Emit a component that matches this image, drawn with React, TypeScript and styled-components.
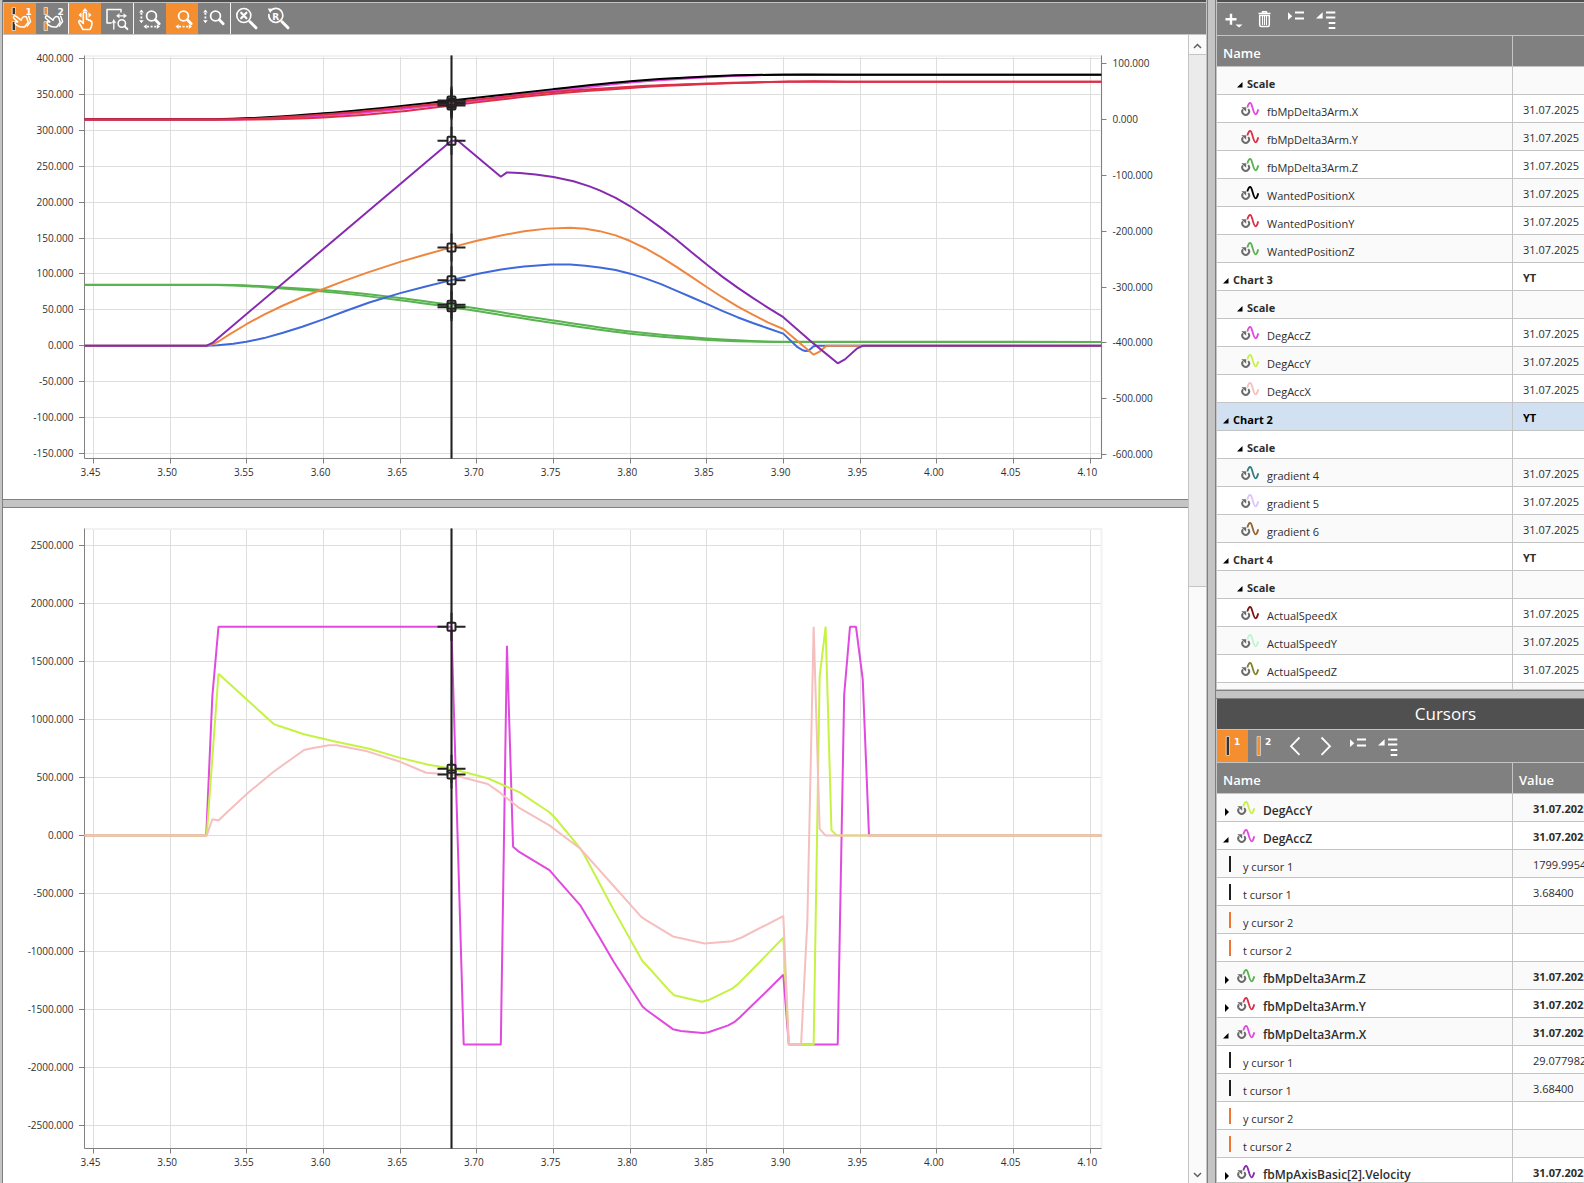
import React, { useLayoutEffect, useRef, useState } from "react";
import styled, { createGlobalStyle, css } from "styled-components";

/* ---------- theme values ---------- */

const c = {
  line: "#c4c4c4",
  edge: "#808080",
  bar: "#808080",
  title: "#505050",
  accent: "#f58e2f",
  text: "#2d2d2d",
  alt: "#fafafa",
  selected: "#d2e1f1",
  magenta: "#e04ade",
  lime: "#c6f244",
  pink: "#f5bfbd",
  red: "#dc3049",
  green: "#58b350",
  purple: "#862bb0",
  orange: "#ee8640",
  blue: "#3f68d9",
};

const Global = createGlobalStyle`
  *, *::before, *::after { box-sizing: border-box; }
  html, body, #root { height: 100%; }
  body {
    margin: 0;
    background: #fff;
    color: ${c.text};
    font-family: "Open Sans", "Noto Sans", sans-serif;
    font-size: 11px;
  }
`;

/* ---------- page frame ---------- */

const Page = styled.div`
  display: grid;
  grid-template-columns: 3px minmax(0, 1fr) 9px 368px;
  height: 100vh;
  overflow: hidden;
`;

const LeftEdge = styled.div`
  background: ${c.line};
  border-right: 1px solid ${c.edge};
`;

const Splitter = styled.div<{ $horizontal?: boolean }>`
  background: ${c.line};
  border: 0 solid ${c.edge};
  border-width: ${(p) => (p.$horizontal ? "1px 0" : "0 1px")};
`;

const TopStrip = styled.div`
  flex: none;
  height: 3px;
  background: ${c.title};
  border-bottom: 1px solid ${c.line};
`;

const Workspace = styled.main`
  display: flex;
  flex-direction: column;
  min-width: 0;
  min-height: 0;
  border-right: 1px solid ${c.line};
`;

const WorkArea = styled.div`
  flex: 1;
  display: flex;
  min-height: 0;
`;

const ChartStack = styled.div`
  flex: 1;
  min-width: 0;
  display: grid;
  grid-template-rows: minmax(0, 464fr) 9px minmax(0, 675fr);
`;

const SidePanels = styled.aside`
  display: grid;
  grid-template-rows: minmax(0, 690fr) 9px minmax(0, 484fr);
  min-width: 0;
  overflow: hidden;
`;

const Panel = styled.section`
  display: flex;
  flex-direction: column;
  width: 458px;
  min-height: 0;
  overflow: hidden;
  border-left: 1px solid ${c.line};
  border-bottom: 1px solid ${c.line};
`;

const PanelTitle = styled.h2`
  flex: none;
  margin: 0;
  height: 31px;
  line-height: 29px;
  text-align: center;
  font-size: 17px;
  font-weight: 400;
  color: #fff;
  background: ${c.title};
  border-bottom: 1px solid ${c.line};
`;

/* ---------- toolbars ---------- */

const Toolbar = styled.div`
  flex: none;
  display: flex;
  height: 32px;
  background: ${c.bar};
  border-bottom: 1px solid ${c.line};
`;

const SideToolbar = styled(Toolbar)`
  height: 33px;
`;

const ToolButton = styled.button<{ $active?: boolean; $narrow?: boolean }>`
  display: flex;
  align-items: flex-start;
  width: ${(p) => (p.$narrow ? "31px" : "32px")};
  height: 100%;
  padding: 0;
  border: 0;
  background: ${(p) => (p.$active ? c.accent : "transparent")};
`;

const ToolGroup = styled.div`
  display: flex;
  border-right: 1px solid #f4f4f4;
  &:first-child {
    border-left: 1px solid ${c.line};
  }
  &:last-child {
    border-right: 0;
  }
`;

/* ---------- scroll bar ---------- */

const ScrollBar = styled.div`
  flex: none;
  width: 18px;
  display: flex;
  flex-direction: column;
  background: ${c.alt};
  border-left: 1px solid ${c.line};
`;

const ScrollButton = styled.button`
  flex: none;
  width: 17px;
  height: 19px;
  padding: 2px 0 0;
  border: 0;
  background: transparent;
  display: grid;
  place-items: center;
`;

const ScrollThumb = styled.div`
  flex: 533;
  background: #ebebeb;
  border: solid ${c.line};
  border-width: 1px 0;
`;

const ScrollRest = styled.div`
  flex: 579;
`;

/* ---------- tables ---------- */

const Grid = styled.table`
  width: 100%;
  table-layout: fixed;
  border-collapse: separate;
  border-spacing: 0;
`;

const NameCol = styled.col`
  width: 296px;
`;

const HeadCell = styled.th`
  height: 31px;
  padding: 3px 6px 0;
  text-align: left;
  font-size: 13px;
  line-height: 16px;
  font-weight: 600;
  color: #fff;
  background: ${c.bar};
  border: 0 solid ${c.line};
  border-width: 0 1px 1px 0;
`;

const Row = styled.tr<{ $selected?: boolean }>`
  background: #fff;
  &:nth-child(odd) {
    background: ${c.alt};
  }
  ${(p) =>
    p.$selected &&
    css`
      && {
        background: ${c.selected};
        color: #000;
      }
    `}
`;

const cell = css`
  height: 28px;
  border: 0 solid ${c.line};
  border-width: 0 1px 1px 0;
  line-height: 15px;
  white-space: nowrap;
`;

const NameCell = styled.td`
  ${cell}
  padding: 0;
`;

const ValueCell = styled.td<{ $bold?: boolean; $indent: number }>`
  ${cell}
  padding: 1px 0 0 ${(p) => p.$indent}px;
  font-weight: ${(p) => (p.$bold ? 700 : 400)};
`;

const NameLine = styled.div<{ $indent: number; $gap: number; $bold?: boolean; $large?: boolean }>`
  display: flex;
  align-items: center;
  gap: ${(p) => p.$gap}px;
  height: 27px;
  padding-left: ${(p) => p.$indent}px;
  font-size: ${(p) => (p.$large ? "12px" : "11px")};
  font-weight: ${(p) => (p.$bold ? (p.$large ? 600 : 700) : 400)};
`;

const Label = styled.span`
  padding-top: 6px;
`;

const CursorMark = styled.span<{ $color: string }>`
  width: 2px;
  height: 16px;
  background: ${(p) => p.$color};
`;

const ArrowSlot = styled.button`
  width: 6px;
  height: 20px;
  padding: 8px 0 0;
  border: 0;
  background: transparent;
  display: flex;
  align-items: center;
  svg {
    flex: none;
  }
`;

/* ---------- icons ---------- */

const Svg = ({ children, w = 32 }: { children: React.ReactNode; w?: number }) => (
  <svg width={w} height={31} viewBox={`0 0 ${w} 31`} fill="none" stroke="#fff" strokeWidth={1.6} strokeLinecap="round" strokeLinejoin="round" aria-hidden>
    {children}
  </svg>
);

const digit = { fontFamily: '"DejaVu Sans", sans-serif', fontWeight: 700, fontSize: 9, fill: "#fff", stroke: "none" } as const;

const CursorHandIcon = ({ n, color }: { n: number; color: string }) => (
  <Svg>
    <g fill={color} stroke="#e6e6e6" strokeWidth={0.8}>
      <rect x={8.5} y={4.5} width={3} height={7} />
      <rect x={8.5} y={18.5} width={3} height={9} />
    </g>
    <path d="M17 17.200l-5.200-4c-1.500-1-3.200.6-2 2l4 3.700c-2.500-.4-3.800 1.200-1.800 2.700 1.600 1.300 3.500 2.400 6 2.400h2.700l3.500-4.700-1.700-5.300c-2.200-1-4.200-.4-5.500 3.200z" strokeWidth={1.500} />
    <path d="M24.700 13.200l1.900 5.300-3.400 4.700" strokeWidth={1.400} />
    <text x={21.5} y={12} {...digit}>{n}</text>
  </Svg>
);

const PanIcon = () => (
  <Svg>
    <g fill="#fff" stroke="none">
      <path d="M16 5l3 3.500h-6zM9.500 12l3-2.800v5.600zM22.500 12l-3-2.800v5.600z" />
    </g>
    <path d="M14.300 18.500v-7.700a1.600 1.600 0 0 1 3.200 0v5.700c1.400-.5 2.200 0 2.400.9 1.200-.3 2 .2 2.100 1 .8.2 1.100.8 1 1.700l-.5 3.200-1.500 3.200h-7l-3.700-6.300c-.9-1.500-.7-2.700.6-2.600 1 .1 2 1.600 3.400 2.900z" />
  </Svg>
);

const ZoomRectIcon = () => (
  <Svg>
    <path d="M10.500 20H6V6.500h14v3" strokeWidth={1.500} strokeLinecap="butt" />
    <path d="M16 12.800h9M12.800 17v9" strokeWidth={1.300} />
    <path d="M18 10.800l-2.200 2 2.200 2zM23 10.800l2.200 2-2.200 2zM10.800 19.500l2-2.300 2 2.300z" fill="#fff" strokeWidth={0.500} />
    <circle cx={20.800} cy={20.500} r={3.700} strokeWidth={1.500} />
    <path d="M23.600 23.300l2.800 2.800" strokeWidth={2} />
  </Svg>
);

const Lens = ({ x }: { x: number }) => (
  <>
    <circle cx={x} cy={13} r={4.900} strokeWidth={1.800} />
    <path d={`M${x + 3.800} 16.800l3.900 4`} strokeWidth={2.800} />
  </>
);

const VArrows = () => (
  <>
    <path d="M7.400 10v7.500" strokeWidth={1.800} strokeDasharray="1.800 1.800" strokeLinecap="butt" />
    <path d="M7.400 6.600l2.300 3H5.100zM7.400 20.200l2.300-3H5.100z" fill="#fff" stroke="none" />
  </>
);

const HArrows = () => (
  <>
    <path d="M13 23.600h9.500" strokeWidth={1.800} strokeDasharray="2 1.600" strokeLinecap="butt" />
    <path d="M9.500 23.600l3.200-2.300v4.600zM26 23.600l-3.200-2.300v4.600z" fill="#fff" stroke="none" />
  </>
);

const BigHandle = () => <path d="M19 18.800l6 6" strokeWidth={3} />;

const ResetXIcon = () => (
  <Svg>
    <circle cx={12.800} cy={12.500} r={7} strokeWidth={1.600} />
    <path d="M10.200 9.700l5.200 5.600M15.400 9.700l-5.200 5.600" strokeWidth={2.200} />
    <BigHandle />
  </Svg>
);

const ResetRIcon = () => (
  <Svg>
    <path d="M8.200 7.200a7 7 0 1 1-2.300 4.300" strokeWidth={1.600} />
    <path d="M4.800 5.600l5.200.2-2.800 4.300z" fill="#fff" stroke="none" />
    <text x={9.300} y={16.500} {...digit}>R</text>
    <BigHandle />
  </Svg>
);

const AddIcon = () => (
  <Svg w={31}>
    <path d="M14 10.800v11M8.500 16.300h11" strokeWidth={2.400} strokeLinecap="butt" />
    <path d="M18.500 21.500h7l-3.500 3z" fill="#fff" stroke="none" />
  </Svg>
);

const TrashIcon = () => (
  <Svg w={31}>
    <path d="M10.500 10.500h12M14.500 10V8.700h4V10" strokeWidth={1.500} strokeLinecap="butt" />
    <path d="M11.700 12.500h9.600V22a1.500 1.500 0 0 1-1.500 1.500h-6.600a1.500 1.500 0 0 1-1.500-1.500z" strokeWidth={1.500} />
    <path d="M14.500 13v9M16.500 13v9M18.500 13v9" strokeWidth={1.100} strokeLinecap="butt" />
  </Svg>
);

const ExpandIcon = () => (
  <Svg w={31}>
    <path d="M9 9.300l4.300 3.900L9 17z" fill="#fff" stroke="none" />
    <path d="M16 9.500h9M16 15.500h9" strokeWidth={2} strokeLinecap="butt" />
  </Svg>
);

const CollapseIcon = () => (
  <Svg w={31}>
    <path d="M12.600 9.300v6.200H6z" fill="#fff" stroke="none" />
    <path d="M16 9.500h9.300M16 14.500h9.300M18.700 20h6.600M18.700 25h6.600" strokeWidth={2} strokeLinecap="butt" />
  </Svg>
);

const CursorBarIcon = ({ n, color }: { n: number; color: string }) => (
  <Svg w={31}>
    <rect x={9.500} y={6.500} width={3} height={19} fill={color} stroke="#d0c8c0" strokeWidth={1} />
    <text x={17} y={15} {...digit}>{n}</text>
  </Svg>
);

const ChevronIcon = ({ d }: { d: string }) => (
  <Svg w={31}>
    <path d={d} strokeWidth={1.800} strokeLinecap="butt" strokeLinejoin="miter" />
  </Svg>
);

const ScrollArrow = ({ up }: { up?: boolean }) => (
  <svg width={9} height={6} viewBox="0 0 9 6" fill="none" stroke="#606060" strokeWidth={1.500} aria-hidden>
    <path d={up ? "M1 5l3.500-3.500L8 5" : "M1 1l3.500 3.500L8 1"} />
  </svg>
);

const TreeArrow = ({ open }: { open: boolean }) =>
  open ? (
    <svg width={6} height={6} viewBox="0 0 6 6" aria-hidden>
      <path d="M5.500 0v5.500H0z" fill="#000" />
    </svg>
  ) : (
    <svg width={6} height={8} viewBox="0 0 6 8" aria-hidden>
      <path d="M2 0l4 4-4 4z" fill="#000" />
    </svg>
  );

const TraceIcon = ({ color }: { color: string }) => (
  <svg width={18} height={17} viewBox="0 -2 18 17" fill="none" aria-hidden>
    <path d="M2 7.300a3.400 3.400 0 1 0 5.200-.2" stroke="#6b6b6b" strokeWidth={2} />
    <path d="M.3 5.200h4.900v4.600z" fill="#6b6b6b" />
    <path d="M6.300 5.500C7.300 2 8.300.9 9.300 1c2.200.3 2.700 11.300 5.300 11.300 1.300 0 1.700-2 2.700-5" stroke={color} strokeWidth={1.800} />
  </svg>
);

/* ---------- chart ---------- */

type Pt = [number, number];
interface Series {
  color: string;
  points: Pt[];
  smooth?: boolean;
}
interface ChartProps {
  label: string;
  series: Series[];
  yDomain: [number, number];
  yTicks: number[];
  rightDomain?: [number, number];
  rightTicks?: number[];
  bottom: number;
  cursorValues: number[];
}

const T_MIN = 3.44413;
const T_MAX = 4.1073;
const CURSOR_T = 3.6834;
const T_TICKS = Array.from({ length: 14 }, (_, i) => 3.45 + i * 0.05);
const M = { left: 81.5, right: 86.5, top: 20.5 };

const ChartBox = styled.div`
  min-width: 0;
  min-height: 0;
  overflow: hidden;
  background: #fff;
  svg {
    display: block;
  }
  text {
    font-size: 10px;
    fill: #303030;
  }
`;

const useSize = () => {
  const ref = useRef<HTMLDivElement>(null);
  const [size, setSize] = useState({ w: 0, h: 0 });
  useLayoutEffect(() => {
    const el = ref.current;
    if (!el) return;
    const measure = () => setSize({ w: el.clientWidth, h: el.clientHeight });
    measure();
    const ro = new ResizeObserver(measure);
    ro.observe(el);
    return () => ro.disconnect();
  }, []);
  return { ref, size };
};

const snap = (v: number) => Math.round(v - 0.5) + 0.5;

// Cubic through the samples with limited tangents, so that sparse series show no corners.
const smoothPath = (p: Pt[]) => {
  const n = p.length;
  const step = p.slice(1).map((q, i) => q[0] - p[i][0]);
  const slope = p.slice(1).map((q, i) => (q[1] - p[i][1]) / step[i]);
  const tan = p.map((_, i) => {
    if (i === 0) return slope[0];
    if (i === n - 1) return slope[n - 2];
    const a = slope[i - 1];
    const b = slope[i];
    if (a * b <= 0) return 0;
    const mean = (a * step[i] + b * step[i - 1]) / (step[i] + step[i - 1]);
    const limit = 3 * Math.min(Math.abs(a), Math.abs(b));
    return Math.sign(mean) * Math.min(Math.abs(mean), limit);
  });
  let d = `M${p[0][0]} ${p[0][1]}`;
  for (let i = 1; i < n; i++) {
    const h = step[i - 1] / 3;
    d += `C${p[i - 1][0] + h} ${p[i - 1][1] + tan[i - 1] * h} ${p[i][0] - h} ${p[i][1] - tan[i] * h} ${p[i][0]} ${p[i][1]}`;
  }
  return d;
};

const Chart = ({ label, series, yDomain, yTicks, rightDomain, rightTicks = [], bottom, cursorValues }: ChartProps) => {
  const { ref, size } = useSize();
  const { w, h } = size;
  const x0 = M.left;
  const x1 = w - M.right;
  const y0 = M.top;
  const y1 = h - bottom;
  const sx = (t: number) => x0 + ((t - T_MIN) / (T_MAX - T_MIN)) * (x1 - x0);
  const scale = ([lo, hi]: [number, number]) => (v: number) => y1 - ((v - lo) / (hi - lo)) * (y1 - y0);
  const sy = scale(yDomain);
  const sr = rightDomain ? scale(rightDomain) : sy;
  const cx = snap(sx(CURSOR_T));
  return (
    <ChartBox ref={ref}>
      {w > 0 && (
        <svg width={w} height={h} role="img" aria-label={label}>
          <g stroke="#dedede" strokeWidth={1}>
            {T_TICKS.map((t) => (
              <path key={t} d={`M${snap(sx(t))} ${y0}V${y1}`} />
            ))}
            {yTicks.map((v) => (
              <path key={v} d={`M${x0} ${snap(sy(v))}H${x1}`} />
            ))}
          </g>
          <path d={`M${x0} ${y0 + 0.5}H${x1}V${y1}`} fill="none" stroke="#f2f2f2" strokeWidth={2} />
          <g stroke="#808080" strokeWidth={1} fill="none">
            <path d={`M${x0} ${y0}V${y1}H${x1}`} />
            {rightDomain && <path d={`M${x1} ${y0}V${y1}`} />}
            {T_TICKS.map((t) => (
              <path key={t} d={`M${snap(sx(t))} ${y1}v5`} />
            ))}
            {yTicks.map((v) => (
              <path key={v} d={`M${x0 - 5.5} ${snap(sy(v))}h5`} />
            ))}
            {rightTicks.map((v) => (
              <path key={v} d={`M${x1} ${snap(sr(v))}h5`} />
            ))}
          </g>
          {series.map((s, i) => {
            const pts = s.points.map(([t, v]): Pt => [sx(t), sy(v)]);
            return (
              <path
                key={i}
                d={s.smooth ? smoothPath(pts) : "M" + pts.map((p) => p.join(" ")).join("L")}
                fill="none"
                stroke={s.color}
                strokeWidth={2}
                strokeLinejoin="bevel"
              />
            );
          })}
          <path d={`M${cx} ${y0}V${y1}`} stroke="#222" strokeOpacity={0.55} strokeWidth={3} />
          <path d={`M${cx} ${y0}V${y1}`} stroke="#222" strokeWidth={1} />
          {cursorValues.map((v, i) => {
            const y = sy(v);
            return (
              <g key={i} stroke="#222" fill="none">
                <path d={`M${cx} ${y - 14}v10M${cx} ${y + 4}v10`} strokeWidth={2} />
                <path d={`M${cx - 14} ${y}h10M${cx + 4} ${y}h10`} strokeWidth={2} />
                <rect x={cx - 4} y={y - 4} width={8} height={8} rx={1} strokeWidth={2} />
              </g>
            );
          })}
          {T_TICKS.map((t) => (
            <text key={t} x={sx(t) - 3} y={y1 + 17} textAnchor="middle">
              {t.toFixed(2)}
            </text>
          ))}
          {yTicks.map((v) => (
            <text key={v} x={x0 - 11} y={snap(sy(v)) + 3.500} textAnchor="end">
              {v.toFixed(3)}
            </text>
          ))}
          {rightTicks.map((v) => (
            <text key={v} x={x1 + 11} y={snap(sr(v)) + 3.500}>
              {v.toFixed(3)}
            </text>
          ))}
        </svg>
      )}
    </ChartBox>
  );
};

const span = (start: number, mid: Pt[], end: number): Pt[] => [[T_MIN, start], ...mid, [T_MAX, end]];

const positionSeries: Series[] = [
  { color: c.magenta, smooth: true, points: span(315.1, [[3.53, 315.1], [3.5998, 321.5], [3.6834, 338.6], [3.75, 355.5], [3.8, 367.2], [3.85, 374.4], [3.89, 377.2], [3.915, 377.9], [3.94, 377.4]], 377.2) },
  { color: c.magenta, smooth: true, points: span(315.1, [[3.53, 315.1], [3.5998, 320], [3.6834, 337], [3.75, 354.3], [3.8, 366.4], [3.85, 373.9], [3.9, 377.4]], 377.2) },
  { color: "#000", smooth: true, points: span(315.4, [[3.528, 315.4], [3.5998, 323.6], [3.6834, 341.3], [3.75, 357.3], [3.8, 368.3], [3.85, 375], [3.9, 377.3]], 377.4) },
  { color: c.red, smooth: true, points: span(314.9, [[3.53, 314.9], [3.5998, 321.8], [3.6834, 338.8], [3.75, 353.4], [3.8, 360.6], [3.85, 365], [3.9, 367.6]], 367.6) },
  { color: c.red, smooth: true, points: span(314.9, [[3.54, 314.9], [3.5998, 317.8], [3.65, 326], [3.6834, 334.6], [3.75, 350.8], [3.8, 358.9], [3.85, 364.3], [3.9, 367.6], [3.9194, 368.2], [3.945, 367.6]], 367.6) },
  { color: c.green, smooth: true, points: span(84.8, [[3.53, 84.8], [3.5687, 82], [3.5998, 77.7], [3.65, 66.6], [3.6834, 57], [3.75, 35.2], [3.8, 19.8], [3.8503, 10], [3.9, 5.6]], 5.4) },
  { color: c.green, smooth: true, points: span(84.5, [[3.53, 84.5], [3.5687, 80.5], [3.5998, 75.4], [3.65, 63.4], [3.6834, 53.6], [3.75, 31.6], [3.8, 16.9], [3.8503, 8.2], [3.9, 5.4]], 5.4) },
  { color: c.blue, points: span(0, [[3.5235, 0], [3.531, 0.9], [3.5412, 2.8], [3.5497, 5.6], [3.5612, 10.7], [3.5736, 18.1], [3.5861, 26.5], [3.5998, 36.7], [3.6148, 48.7], [3.6298, 60.3], [3.65, 73.3], [3.666, 82.1], [3.6834, 91.4], [3.7, 99.8], [3.7158, 106.3], [3.7308, 110.5], [3.7483, 113.1], [3.7608, 113], [3.7707, 111.4], [3.7801, 108.9], [3.7905, 105.4], [3.8, 100.4], [3.8098, 93.9], [3.8201, 85.8], [3.8299, 76.9], [3.84, 67.6], [3.8503, 57.9], [3.86, 48.7], [3.8699, 39.8], [3.8799, 31.8], [3.8897, 24.4], [3.8998, 16.9], [3.9091, -2], [3.9121, -5.8], [3.9142, -7.2], [3.9162, -7], [3.9194, -1], [3.921, 0]], 0) },
  { color: c.orange, points: span(0, [[3.5235, 0], [3.5275, 2], [3.5315, 6], [3.5387, 15.8], [3.5497, 30], [3.5612, 43.5], [3.5736, 56.1], [3.5861, 67.6], [3.5998, 79], [3.6135, 90.3], [3.6285, 101.8], [3.65, 116.8], [3.666, 126.8], [3.6834, 137], [3.7, 146.2], [3.7158, 153.6], [3.7308, 159.4], [3.7458, 163.1], [3.7608, 164.3], [3.7707, 162.9], [3.7801, 159.6], [3.7905, 153.7], [3.8, 145.8], [3.8098, 135.8], [3.8201, 123.3], [3.8299, 110.2], [3.84, 95.9], [3.8503, 81.1], [3.86, 67.6], [3.8699, 54.9], [3.8799, 43.3], [3.8897, 32.5], [3.8998, 23.4], [3.9196, -12.4], [3.9232, -8.5], [3.9279, 0]], 0) },
  { color: c.purple, points: span(0, [[3.5235, 0], [3.5275, 4], [3.6834, 285.4], [3.6876, 285.4], [3.7156, 235.3], [3.7196, 241.4], [3.728, 240.6], [3.7383, 238.5], [3.75, 235], [3.763, 229], [3.773, 222.2], [3.7801, 216.3], [3.7905, 205.9], [3.8, 194.2], [3.8098, 180], [3.8201, 164.1], [3.83, 147.9], [3.84, 130.2], [3.8503, 112.4], [3.86, 96.3], [3.87, 81], [3.8799, 66.6], [3.8897, 53.2], [3.8998, 39.8], [3.9196, 3], [3.9353, -24.4], [3.94, -18.9], [3.9477, -4], [3.9516, 0]], 0) },
];

const accelSeries: Series[] = [
  { color: c.magenta, points: span(0, [[3.5235, 0], [3.5275, 1203], [3.5315, 1800], [3.6834, 1800], [3.6914, -1800], [3.7156, -1800], [3.7196, 1635], [3.7236, -96], [3.7276, -141], [3.7473, -298], [3.7538, -396], [3.7673, -599], [3.7801, -880], [3.7892, -1087], [3.808, -1473], [3.8106, -1503], [3.8278, -1668], [3.833, -1684], [3.8472, -1702], [3.851, -1695], [3.8639, -1635], [3.8678, -1608], [3.8717, -1563], [3.8846, -1398], [3.8998, -1199], [3.9034, -1800], [3.9353, -1800], [3.9395, 1214], [3.9433, 1800], [3.9472, 1800], [3.9516, 1346], [3.9557, 0]], 0) },
  { color: c.lime, points: span(0, [[3.5238, 0], [3.5315, 1395], [3.5674, 963], [3.5711, 944], [3.5873, 873], [3.606, 816], [3.6298, 749], [3.65, 670], [3.6684, 610], [3.6747, 598], [3.6834, 576], [3.7071, 494], [3.7276, 374], [3.7473, 201], [3.7508, 156], [3.7673, -107], [3.7707, -182], [3.7801, -415], [3.7892, -640], [3.808, -1083], [3.8111, -1124], [3.8253, -1334], [3.8286, -1376], [3.8467, -1432], [3.851, -1417], [3.8665, -1319], [3.8704, -1278], [3.8846, -1087], [3.8998, -880], [3.9034, -1800], [3.9196, -1800], [3.9235, 1368], [3.9274, 1800], [3.9312, 47], [3.9348, 0]], 0) },
  { color: c.pink, points: span(0, [[3.5238, 0], [3.5275, 141], [3.5315, 130], [3.5362, 190], [3.5512, 373], [3.5674, 550], [3.5873, 738], [3.5923, 753], [3.6036, 779], [3.6086, 779], [3.6285, 726], [3.65, 636], [3.6669, 542], [3.6834, 527], [3.7071, 445], [3.7133, 388], [3.7276, 238], [3.7473, 88], [3.7673, -111], [3.7801, -300], [3.7892, -434], [3.8072, -700], [3.8106, -730], [3.8278, -869], [3.833, -884], [3.8485, -929], [3.8665, -910], [3.873, -876], [3.8998, -693], [3.9034, -1800], [3.9114, -1800], [3.9155, -734], [3.9196, 1800], [3.9235, 58], [3.9274, 0]], 0) },
];

const range = (from: number, to: number, step: number) => {
  const out: number[] = [];
  for (let v = from; v <= to; v += step) out.push(v);
  return out;
};

/* ---------- data for the lists ---------- */

type SignalRow =
  | { kind: "chart"; name: string; selected?: boolean }
  | { kind: "scale" }
  | { kind: "trace"; name: string; color: string };

const trace = (name: string, color: string): SignalRow => ({ kind: "trace", name, color });

const signalRows: SignalRow[] = [
  { kind: "scale" },
  trace("fbMpDelta3Arm.X", c.magenta),
  trace("fbMpDelta3Arm.Y", c.red),
  trace("fbMpDelta3Arm.Z", c.green),
  trace("WantedPositionX", "#000"),
  trace("WantedPositionY", c.red),
  trace("WantedPositionZ", c.green),
  { kind: "chart", name: "Chart 3" },
  { kind: "scale" },
  trace("DegAccZ", c.magenta),
  trace("DegAccY", c.lime),
  trace("DegAccX", c.pink),
  { kind: "chart", name: "Chart 2", selected: true },
  { kind: "scale" },
  trace("gradient 4", "#2f7f80"),
  trace("gradient 5", "#dcc3fb"),
  trace("gradient 6", "#966432"),
  { kind: "chart", name: "Chart 4" },
  { kind: "scale" },
  trace("ActualSpeedX", "#7d1414"),
  trace("ActualSpeedY", "#bff5cb"),
  trace("ActualSpeedZ", "#82822a"),
];

interface CursorGroup {
  name: string;
  color: string;
  y?: string;
}

const cursorGroups: CursorGroup[] = [
  { name: "DegAccY", color: c.lime },
  { name: "DegAccZ", color: c.magenta, y: "1799.9954" },
  { name: "fbMpDelta3Arm.Z", color: c.green },
  { name: "fbMpDelta3Arm.Y", color: c.red },
  { name: "fbMpDelta3Arm.X", color: c.magenta, y: "29.077982" },
  { name: "fbMpAxisBasic[2].Velocity", color: c.purple },
];

const DATE = "31.07.2025";

const SignalLine = ({ row }: { row: SignalRow }) => {
  if (row.kind === "trace")
    return (
      <Row>
        <NameCell>
          <NameLine $indent={24} $gap={8}>
            <TraceIcon color={row.color} />
            <Label>{row.name}</Label>
          </NameLine>
        </NameCell>
        <ValueCell $indent={10}>{DATE}</ValueCell>
      </Row>
    );
  const chart = row.kind === "chart";
  return (
    <Row $selected={chart && row.selected}>
      <NameCell>
        <NameLine $indent={chart ? 6 : 20} $gap={4} $bold>
          <ArrowSlot aria-label="Collapse">
            <TreeArrow open />
          </ArrowSlot>
          <Label>{chart ? row.name : "Scale"}</Label>
        </NameLine>
      </NameCell>
      <ValueCell $indent={10} $bold>
        {chart ? "YT" : ""}
      </ValueCell>
    </Row>
  );
};

const CursorLines = ({ group }: { group: CursorGroup }) => (
  <>
    <Row>
      <NameCell>
        <NameLine $indent={6} $gap={8} $bold $large>
          <ArrowSlot aria-label={group.y ? "Collapse" : "Expand"}>
            <TreeArrow open={!!group.y} />
          </ArrowSlot>
          <TraceIcon color={group.color} />
          <Label>{group.name}</Label>
        </NameLine>
      </NameCell>
      <ValueCell $indent={20} $bold>
        {DATE}
      </ValueCell>
    </Row>
    {group.y &&
      [
        ["y cursor 1", group.y, "#202020"],
        ["t cursor 1", "3.68400", "#202020"],
        ["y cursor 2", "", "#ee7632"],
        ["t cursor 2", "", "#ee7632"],
      ].map(([name, value, color]) => (
        <Row key={name}>
          <NameCell>
            <NameLine $indent={12} $gap={12}>
              <CursorMark $color={color} />
              <Label>{name}</Label>
            </NameLine>
          </NameCell>
          <ValueCell $indent={20}>{value}</ValueCell>
        </Row>
      ))}
  </>
);

const ListHead = ({ value }: { value: string }) => (
  <>
    <colgroup>
      <NameCol />
      <col />
    </colgroup>
    <thead>
      <tr>
        <HeadCell scope="col">Name</HeadCell>
        <HeadCell scope="col">{value}</HeadCell>
      </tr>
    </thead>
  </>
);

export default function App() {
  return (
    <>
      <Global />
      <Page>
        <LeftEdge />
        <Workspace>
          <TopStrip />
          <Toolbar role="toolbar">
            <ToolGroup>
              <ToolButton $active aria-label="Move cursor 1"><CursorHandIcon n={1} color="#333" /></ToolButton>
              <ToolButton aria-label="Move cursor 2"><CursorHandIcon n={2} color={c.accent} /></ToolButton>
            </ToolGroup>
            <ToolGroup>
              <ToolButton $active aria-label="Pan"><PanIcon /></ToolButton>
              <ToolButton aria-label="Zoom to area"><ZoomRectIcon /></ToolButton>
            </ToolGroup>
            <ToolGroup>
              <ToolButton aria-label="Zoom both axes"><Svg><Lens x={17.5} /><VArrows /><HArrows /></Svg></ToolButton>
              <ToolButton $active aria-label="Zoom horizontally"><Svg><Lens x={17.5} /><HArrows /></Svg></ToolButton>
              <ToolButton aria-label="Zoom vertically"><Svg><Lens x={17.5} /><VArrows /></Svg></ToolButton>
            </ToolGroup>
            <ToolGroup>
              <ToolButton aria-label="Fit all"><ResetXIcon /></ToolButton>
              <ToolButton aria-label="Reset zoom"><ResetRIcon /></ToolButton>
            </ToolGroup>
          </Toolbar>
          <WorkArea>
            <ChartStack>
              <Chart
                label="Positions and velocities"
                series={positionSeries}
                yDomain={[-156.9, 404.1]}
                yTicks={range(-150, 400, 50)}
                rightDomain={[-606.9, 114.4]}
                rightTicks={range(-600, 100, 100)}
                bottom={40.5}
                cursorValues={[341.3, 338.8, 337, 334.6, 285.4, 136.9, 91.4, 57, 53.6]}
              />
              <Splitter $horizontal />
              <Chart
                label="Axis accelerations"
                series={accelSeries}
                yDomain={[-2696.5, 2646.5]}
                yTicks={range(-2500, 2500, 500)}
                bottom={34.5}
                cursorValues={[1800, 576, 527]}
              />
            </ChartStack>
            <ScrollBar>
              <ScrollButton aria-label="Scroll up"><ScrollArrow up /></ScrollButton>
              <ScrollThumb />
              <ScrollRest />
              <ScrollButton aria-label="Scroll down"><ScrollArrow /></ScrollButton>
            </ScrollBar>
          </WorkArea>
        </Workspace>
        <Splitter />
        <SidePanels>
          <Panel>
            <TopStrip />
            <SideToolbar role="toolbar">
              <ToolButton $narrow aria-label="Add"><AddIcon /></ToolButton>
              <ToolButton $narrow aria-label="Delete"><TrashIcon /></ToolButton>
              <ToolButton $narrow aria-label="Expand all"><ExpandIcon /></ToolButton>
              <ToolButton $narrow aria-label="Collapse all"><CollapseIcon /></ToolButton>
            </SideToolbar>
            <Grid>
              <ListHead value="" />
              <tbody>
                {signalRows.map((row, i) => (
                  <SignalLine key={i} row={row} />
                ))}
                <Row>
                  <NameCell />
                  <ValueCell $indent={10} />
                </Row>
              </tbody>
            </Grid>
          </Panel>
          <Splitter $horizontal />
          <Panel>
            <PanelTitle>Cursors</PanelTitle>
            <SideToolbar role="toolbar">
              <ToolButton $narrow $active aria-label="Cursor 1"><CursorBarIcon n={1} color="#333" /></ToolButton>
              <ToolButton $narrow aria-label="Cursor 2"><CursorBarIcon n={2} color={c.accent} /></ToolButton>
              <ToolButton $narrow aria-label="Previous"><ChevronIcon d="M20.500 7.500l-8.500 8.700 8.500 8.700" /></ToolButton>
              <ToolButton $narrow aria-label="Next"><ChevronIcon d="M11.500 7.500l8.500 8.700-8.500 8.700" /></ToolButton>
              <ToolButton $narrow aria-label="Expand all"><ExpandIcon /></ToolButton>
              <ToolButton $narrow aria-label="Collapse all"><CollapseIcon /></ToolButton>
            </SideToolbar>
            <Grid>
              <ListHead value="Value" />
              <tbody>
                {cursorGroups.map((g) => (
                  <CursorLines key={g.name} group={g} />
                ))}
              </tbody>
            </Grid>
          </Panel>
        </SidePanels>
      </Page>
    </>
  );
}
